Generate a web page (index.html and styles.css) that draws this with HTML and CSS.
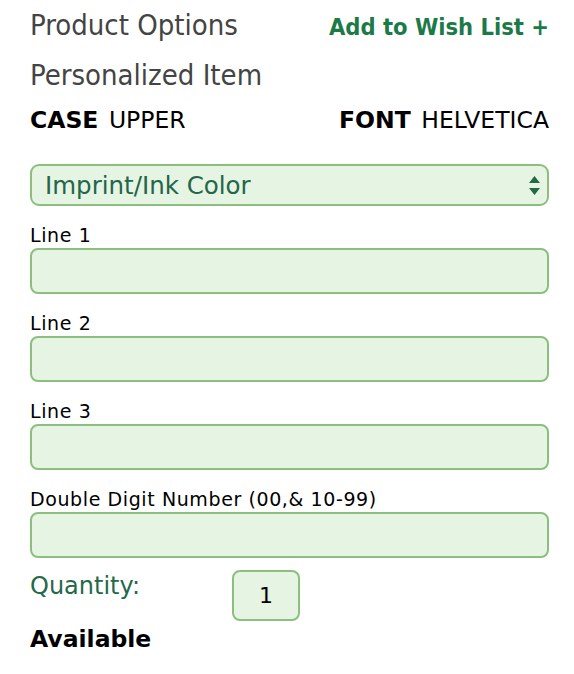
FILE: index.html
```html
<!DOCTYPE html>
<html>
<head>
<meta charset="utf-8">
<link rel="stylesheet" href="styles.css">
</head>
<body>
<div class="options">
  <div class="head-row">
    <h2 class="title">Product Options</h2>
    <a class="wish" href="#">Add to Wish List +</a>
  </div>
  <h3 class="subtitle">Personalized Item</h3>
  <div class="meta-row">
    <div class="meta"><b>CASE</b> <span>UPPER</span></div>
    <div class="meta"><b>FONT</b> <span>HELVETICA</span></div>
  </div>
  <div class="select">
    <span class="select-text">Imprint/Ink Color</span>
    <svg class="arrows" width="11" height="19" viewBox="0 0 11 19"><path d="M5.5 0 L11 7 H0 Z M5.5 19 L11 12 H0 Z" fill="#24684a"/></svg>
  </div>
  <div class="field"><label>Line 1</label><div class="input"></div></div>
  <div class="field"><label>Line 2</label><div class="input"></div></div>
  <div class="field"><label>Line 3</label><div class="input"></div></div>
  <div class="field"><label>Double Digit Number (00,&amp; 10-99)</label><div class="input"></div></div>
  <div class="qty-row">
    <span class="qty-label">Quantity:</span>
    <div class="qty-box">1</div>
  </div>
  <div class="available">Available</div>
</div>
</body>
</html>
```
FILE: styles.css
```css
html, body {
  margin: 0;
  padding: 0;
  background: #fff;
}
body {
  font-family: "DejaVu Sans", Verdana, sans-serif;
}
.options {
  width: 519px;
  padding: 8px 0 0 30px;
}
.head-row {
  display: flex;
  justify-content: space-between;
  align-items: baseline;
}
.title {
  margin: 0;
  font-family: "DejaVu Sans Condensed", "DejaVu Sans", sans-serif;
  font-weight: normal;
  font-size: 29px;
  line-height: 34px;
  color: #444;
}
.wish {
  font-family: "DejaVu Sans Condensed", "DejaVu Sans", sans-serif;
  font-weight: bold;
  font-size: 23.5px;
  color: #1c7a48;
  text-decoration: none;
}
.subtitle {
  margin: 16px 0 0;
  font-family: "DejaVu Sans Condensed", "DejaVu Sans", sans-serif;
  font-weight: normal;
  font-size: 29px;
  line-height: 34px;
  color: #444;
}
.meta-row {
  display: flex;
  justify-content: space-between;
  margin-top: 14px;
  font-size: 23.5px;
  line-height: 28px;
  color: #000;
}
.meta b {
  font-weight: bold;
  margin-right: 3px;
}
.select {
  margin-top: 30px;
  height: 38px;
  border: 2px solid #8cbf7e;
  border-radius: 9px;
  background: #e6f4e3;
  display: flex;
  align-items: center;
  justify-content: space-between;
  padding: 0 7px 0 13px;
}
.select-text {
  font-size: 24.5px;
  color: #23664a;
}
.arrows {
  margin-top: 1px;
}
.field {
  margin-top: 18px;
}
.field label {
  display: block;
  font-size: 19px;
  line-height: 22px;
  letter-spacing: 0.6px;
  color: #000;
}
.input {
  margin-top: 2px;
  height: 42px;
  border: 2px solid #8cbf7e;
  border-radius: 8px;
  background: #e6f4e3;
}
.qty-row {
  display: flex;
  align-items: flex-start;
  margin-top: 12px;
}
.qty-label {
  width: 202px;
  margin-top: 2px;
  font-size: 24px;
  line-height: 28px;
  color: #25684a;
}
.qty-box {
  width: 64px;
  height: 47px;
  border: 2px solid #8cbf7e;
  border-radius: 8px;
  background: #e6f4e3;
  display: flex;
  align-items: center;
  justify-content: center;
  font-size: 22px;
  color: #000;
}
.available {
  margin-top: 5px;
  font-weight: bold;
  font-size: 23.5px;
  line-height: 26px;
  color: #000;
}
```
